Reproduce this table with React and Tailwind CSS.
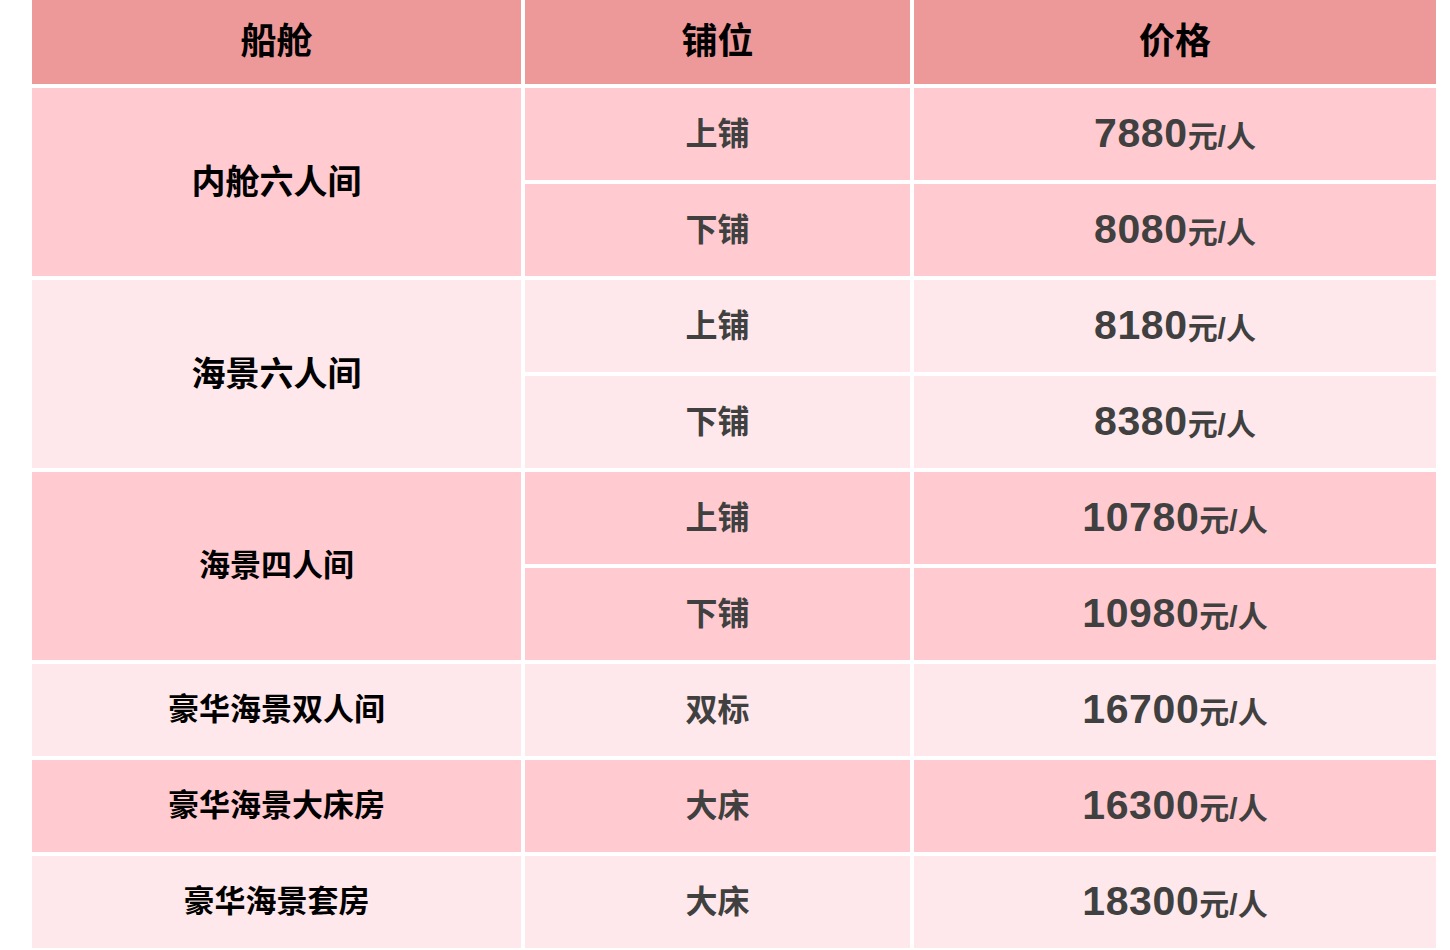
const groups = [
  {
    name: '内舱六人间',
    size: 'text-[34px]',
    bg: 'bg-[#ffcbd0]',
    rows: [
      { berth: '上铺', price: '7880' },
      { berth: '下铺', price: '8080' },
    ],
  },
  {
    name: '海景六人间',
    size: 'text-[34px]',
    bg: 'bg-[#ffe8eb]',
    rows: [
      { berth: '上铺', price: '8180' },
      { berth: '下铺', price: '8380' },
    ],
  },
  {
    name: '海景四人间',
    size: 'text-[31px]',
    bg: 'bg-[#ffcbd0]',
    rows: [
      { berth: '上铺', price: '10780' },
      { berth: '下铺', price: '10980' },
    ],
  },
  {
    name: '豪华海景双人间',
    size: 'text-[31px]',
    bg: 'bg-[#ffe8eb]',
    rows: [{ berth: '双标', price: '16700' }],
  },
  {
    name: '豪华海景大床房',
    size: 'text-[31px]',
    bg: 'bg-[#ffcbd0]',
    rows: [{ berth: '大床', price: '16300' }],
  },
  {
    name: '豪华海景套房',
    size: 'text-[31px]',
    bg: 'bg-[#ffe8eb]',
    rows: [{ berth: '大床', price: '18300' }],
  },
]

function Cell({ className = '', children }) {
  return <div className={`flex items-center justify-center ${className}`}>{children}</div>
}

export default function App() {
  return (
    <div
      className="w-[1450px] h-[950px] bg-white pl-[32px] overflow-hidden"
      style={{ fontFamily: '"Liberation Sans", "Noto Sans CJK SC", sans-serif' }}
    >
      <div className="grid grid-cols-[489px_385px_522px] grid-rows-[84px_repeat(9,92px)] gap-[4px] font-bold">
        {/* Header */}
        {['船舱', '铺位', '价格'].map((h) => (
          <Cell key={h} className="bg-[#ed999a] text-[36px] text-black">
            {h}
          </Cell>
        ))}

        {groups.map((g) =>
          g.rows.map((r, i) => (
            <div key={g.name + r.berth} className="contents">
              {i === 0 && (
                <Cell
                  className={`${g.bg} ${g.size} text-black ${g.rows.length === 2 ? 'row-span-2' : ''}`}
                >
                  {g.name}
                </Cell>
              )}
              <Cell className={`${g.bg} text-[32px] text-[#404040]`}>{r.berth}</Cell>
              <Cell className={`${g.bg} text-[#404040] items-baseline`}>
                <span className="text-[41px] tracking-[0.6px]">{r.price}</span>
                <span className="text-[30px] relative top-[2px]">元/人</span>
              </Cell>
            </div>
          ))
        )}
      </div>
    </div>
  )
}
